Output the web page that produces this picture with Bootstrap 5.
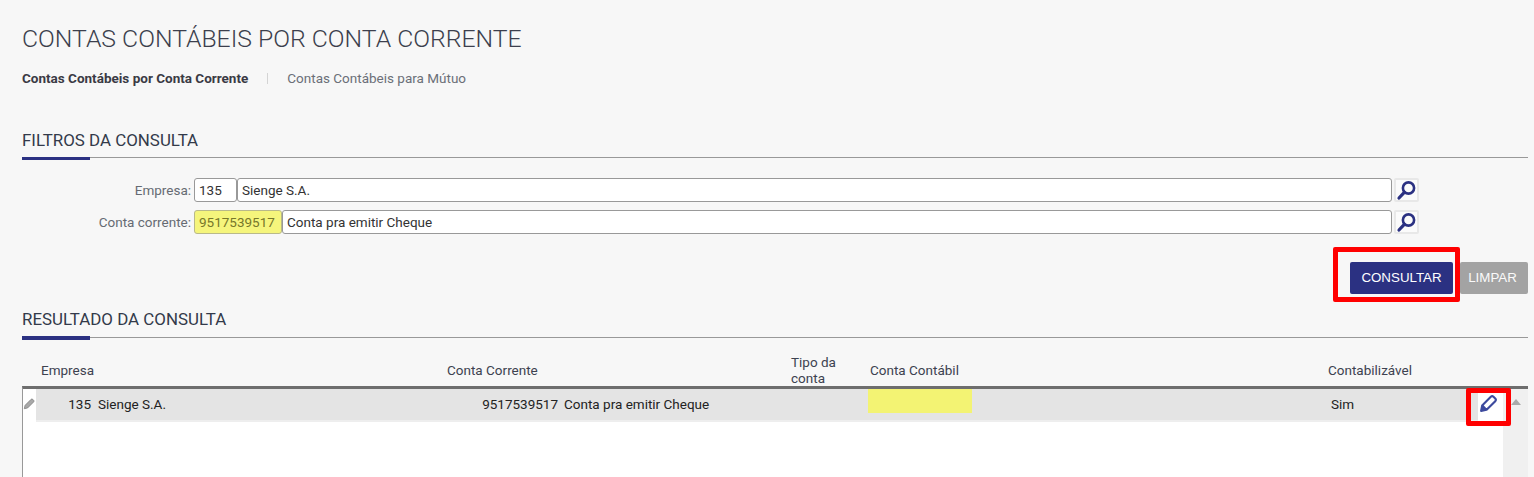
<!DOCTYPE html>
<html lang="pt-BR">
<head>
<meta charset="utf-8">
<title>Contas Contábeis por Conta Corrente</title>
<link href="https://cdn.jsdelivr.net/npm/bootstrap@5.3.0/dist/css/bootstrap.min.css" rel="stylesheet">
<style>
html,body{height:477px;overflow:hidden}
body{background:#f7f7f7;font-family:Roboto,"Liberation Sans",sans-serif;font-size:13.5px;color:#333}
.pagina{padding:0 6px 0 22px}
.titulo{font-size:24.75px;font-weight:300;line-height:30px;margin:0;padding-top:24px;color:#3c3f4d;text-transform:uppercase}
.abas{margin-top:15px;height:18px;line-height:18px}
.aba-ativa{font-weight:700;color:#3a3a44;text-decoration:none}
.aba{color:#6b6f78;text-decoration:none}
.aba-sep{width:1px;height:11px;background:#d4d4d4;margin:0 19px}
.secao{border-bottom:1px solid #999;position:relative;font-size:16.9px;line-height:20px;color:#333a4a;padding-bottom:7px;text-transform:uppercase}
.secao::after{content:"";position:absolute;left:0;bottom:-3px;width:68px;height:3px;background:#2b3182}
.secao-f{margin-top:43px}
.filtros{margin-top:20px;width:1397px}
.linha{height:24px;margin-bottom:8px}
.rotulo{width:172px;text-align:right;color:#666b73;padding-right:3px;white-space:nowrap}
.campo.form-control{height:24px;border:1px solid #999;border-radius:3px;padding:0 4px;font-size:13.5px;color:#333;background:#fff;box-shadow:none;min-height:0}
.c-cod{width:43px;flex:none}
.c-conta{width:88px;flex:none;background:#f5f57c!important;color:#77772a!important;border-color:#b9b98a!important}
.c-nome{flex:1;min-width:0}
.lupa{width:25px;height:24px;flex:none;margin-left:2px;background:#fbfbfb;border:2px solid #e8e8e8;padding:0;display:flex;align-items:center;justify-content:center;border-radius:2px}
.acoes{margin-top:28px;gap:7px}
.marca{position:relative}
.marca::after{content:"";position:absolute;border:5px solid #f00;border-radius:2px;pointer-events:none}
.marca-btn::after{left:-17px;right:-7px;top:-15px;bottom:-8px}
.btn-cons.btn{width:103px;height:32px;padding:0;background:#2b3182;border:0;border-radius:2px;color:#fff;font-family:"Liberation Sans",Arial,sans-serif;font-size:13.33px;line-height:32px}
.btn-limp.btn{width:68px;height:32px;padding:0 3px 0 0;background:#a3a3a3;border:0;border-radius:2px;color:#fafafa;font-family:"Liberation Sans",Arial,sans-serif;font-size:13.33px;line-height:32px}
.secao-r{margin-top:15px;padding-bottom:8px}
.secao-r::after{height:4px}
table.grade{table-layout:fixed;border-collapse:separate;border-spacing:0;margin:0;--bs-table-bg:transparent;color:#333}
.grade td,.grade th{padding:0;font-weight:400;vertical-align:middle;border:0;font-size:13.5px;line-height:16px;box-shadow:none}
.cab{margin-top:16px;height:32px}
.cab table.grade{width:1481px}
.cab th{height:32px;color:#3d4250}
.cab .h1o{padding-left:5px}
.cab .h3o{padding-left:3px}
.cab .h4o{padding-left:6px}
.cab .h5o{padding-left:3px}
.corpo-wrap{border-top:3px solid #6e6e6e;height:91px;background:#fff;border-left:1px solid #999}
.corpo{flex:1;min-width:0}
.corpo table.grade{width:1480px}
.rolagem{width:25px;flex:none;background:#f0f0f0;display:flex;justify-content:center;padding-top:10px}
.seta{width:0;height:0;border-left:5px solid transparent;border-right:5px solid transparent;border-bottom:6px solid #aaa}
.grade .lin td{height:33px;background:#e4e4e4;color:#222;border-bottom:2px solid #eee;padding-bottom:2px}
.grade .lin td.ic-l,.grade .lin td.ic-a{background:#fff;border-bottom-color:#fff;padding-left:0}
.grade .lin .num{text-align:right;padding-right:5px}
.grade .lin .num2{padding-right:4px}
.grade .lin .nom{padding-left:2px}
.grade .lin .sim{padding-left:6px}
.grade .lin td.pont{padding:0 0 7px 4px;vertical-align:top}
.amarelo{display:block;width:104px;height:24px;background:#f3f373}
.marca-ed{position:relative;text-align:center}
.marca-ed::after{left:-12px;right:-8px;top:-1px;bottom:-6px}
.marca-ed svg{display:block;margin:0 auto 0 1px}
</style>
</head>
<body>
<div class="pagina">
  <h1 class="titulo">Contas Contábeis por Conta Corrente</h1>
  <div class="abas d-flex align-items-center">
    <a class="aba-ativa" href="#">Contas Contábeis por Conta Corrente</a>
    <span class="aba-sep"></span>
    <a class="aba" href="#">Contas Contábeis para Mútuo</a>
  </div>

  <div class="secao secao-f">Filtros da consulta</div>
  <form class="filtros">
    <div class="linha d-flex align-items-center">
      <label class="rotulo">Empresa:</label>
      <input class="form-control campo c-cod" value="135">
      <input class="form-control campo c-nome" value="Sienge S.A.">
      <button type="button" class="lupa" aria-label="Buscar"><svg width="21" height="21" viewBox="0 0 21 21"><circle cx="12.5" cy="8" r="5.6" fill="none" stroke="#2b3182" stroke-width="2.6"/><path d="M8.3 12.3 3 18" stroke="#2b3182" stroke-width="3.2" stroke-linecap="round"/></svg></button>
    </div>
    <div class="linha d-flex align-items-center">
      <label class="rotulo">Conta corrente:</label>
      <input class="form-control campo c-conta" value="9517539517">
      <input class="form-control campo c-nome" value="Conta pra emitir Cheque">
      <button type="button" class="lupa" aria-label="Buscar"><svg width="21" height="21" viewBox="0 0 21 21"><circle cx="12.5" cy="8" r="5.6" fill="none" stroke="#2b3182" stroke-width="2.6"/><path d="M8.3 12.3 3 18" stroke="#2b3182" stroke-width="3.2" stroke-linecap="round"/></svg></button>
    </div>
  </form>

  <div class="acoes d-flex justify-content-end">
    <div class="marca marca-btn"><button type="button" class="btn btn-cons">CONSULTAR</button></div>
    <button type="button" class="btn btn-limp">LIMPAR</button>
  </div>

  <div class="secao secao-r">Resultado da consulta</div>

  <div class="cab">
    <table class="table grade">
      <colgroup><col style="width:14px"><col style="width:60px"><col style="width:351px"><col style="width:115px"><col style="width:226px"><col style="width:76px"><col style="width:114px"><col style="width:347px"><col style="width:153px"><col style="width:25px"></colgroup>
      <tr>
        <th></th>
        <th colspan="2" class="h1o">Empresa</th>
        <th colspan="2">Conta Corrente</th>
        <th class="h3o">Tipo da conta</th>
        <th colspan="2" class="h4o">Conta Contábil</th>
        <th class="h5o">Contabilizável</th>
        <th></th>
      </tr>
    </table>
  </div>

  <div class="corpo-wrap d-flex">
    <div class="corpo">
      <table class="table grade">
        <colgroup><col style="width:13px"><col style="width:60px"><col style="width:351px"><col style="width:115px"><col style="width:226px"><col style="width:76px"><col style="width:114px"><col style="width:347px"><col style="width:153px"><col style="width:25px"></colgroup>
        <tr class="lin">
          <td class="ic-l"><svg width="12" height="12" viewBox="0 0 14 14" class="d-block"><path d="M1.5 12.5 2.4 8.6 9.4 1.6a1.4 1.4 0 0 1 2 0l1 1a1.4 1.4 0 0 1 0 2L5.4 11.6Z" fill="#a8a8a8" stroke="#808080" stroke-width=".9"/></svg></td>
          <td class="num">135</td>
          <td class="nom">Sienge S.A.</td>
          <td class="num num2">9517539517</td>
          <td class="nom">Conta pra emitir Cheque</td>
          <td></td>
          <td class="pont"><span class="amarelo"></span></td>
          <td></td>
          <td class="sim">Sim</td>
          <td class="ic-a marca marca-ed"><svg width="19" height="19" viewBox="0 0 18 18"><path d="M2 16 3 10.8 11.2 2.6a1.8 1.8 0 0 1 2.5 0l1.7 1.7a1.8 1.8 0 0 1 0 2.5L7.2 15ZM3.2 11 7 14.8" fill="none" stroke="#3d4a9e" stroke-width="2" stroke-linejoin="round"/><path d="M2 16 3 10.8 7.2 15Z" fill="#3d4a9e"/></svg></td>
        </tr>
      </table>
    </div>
    <div class="rolagem"><span class="seta"></span></div>
  </div>
</div>
<script src="https://cdn.jsdelivr.net/npm/bootstrap@5.3.0/dist/js/bootstrap.bundle.min.js"></script>
</body>
</html>
